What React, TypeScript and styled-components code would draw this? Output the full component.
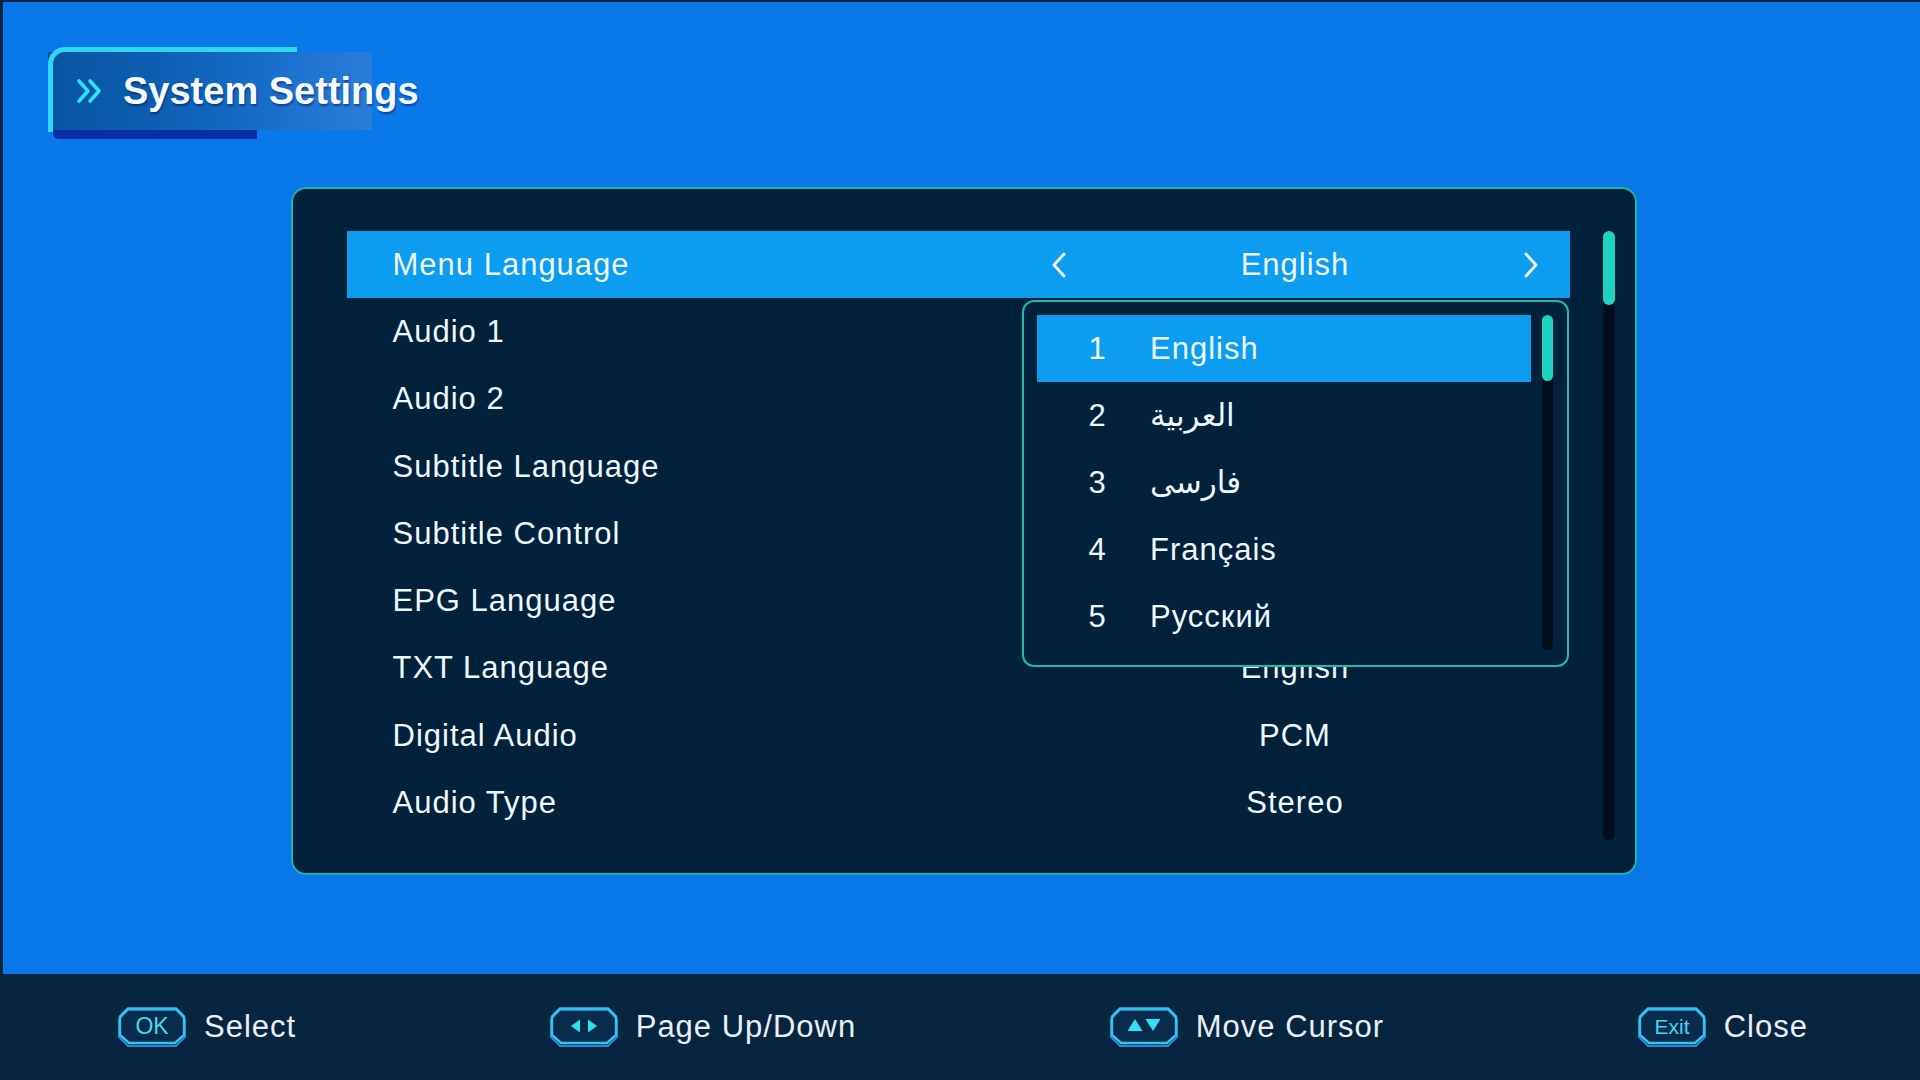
import React, { FC } from 'react'
import styled, { createGlobalStyle } from 'styled-components'

const rows = [
  { label: 'Menu Language', value: 'English' },
  { label: 'Audio 1', value: 'English' },
  { label: 'Audio 2', value: 'English' },
  { label: 'Subtitle Language', value: 'English' },
  { label: 'Subtitle Control', value: 'Off' },
  { label: 'EPG Language', value: 'English' },
  { label: 'TXT Language', value: 'English' },
  { label: 'Digital Audio', value: 'PCM' },
  { label: 'Audio Type', value: 'Stereo' },
]

const languages = ['English', 'العربية', 'فارسى', 'Français', 'Русский']

const GlobalStyle = createGlobalStyle`
  html, body {
    margin: 0;
    padding: 0;
  }

  body {
    width: 1920px;
    height: 1080px;
    overflow: hidden;
    background: #0b78ea;
    font-family: "Liberation Sans", Arial, "DejaVu Sans", sans-serif;
  }
`

const Chevrons: FC = () => (
  <ChevronIcon width = "26" height = "26" viewBox = "0 0 26 26">
    <path d = "M3 3 L12 13 L3 23 M14 3 L23 13 L14 23" fill = "none" stroke = "#2fe3f2" strokeWidth = "3.6" strokeLinecap = "round" strokeLinejoin = "round" />
  </ChevronIcon>
)

const Arrow: FC <{ dir: 'left' | 'right' }> = ({ dir }) => (
  <svg width = "16" height = "26" viewBox = "0 0 16 26">
    <path
      d = { dir === 'left' ? 'M13 2 L3 13 L13 24' : 'M3 2 L13 13 L3 24' }
      fill = "none"
      stroke = "#f2fbff"
      strokeWidth = "2.8"
      strokeLinecap = "round"
      strokeLinejoin = "round"
    />
  </svg>
)

type KeyKind = 'ok' | 'leftright' | 'updown' | 'exit'

const KeyBadge: FC <{ kind: KeyKind }> = ({ kind }) => (
  <svg width = "72" height = "42" viewBox = "0 0 72 42">
    <polygon points = "12,4 60,4 69,13 69,31 60,40 12,40 3,31 3,13" fill = "#0a2c4c" stroke = "#2a84d8" strokeWidth = "2" />
    <polygon points = "12,2.5 60,2.5 68,10.5 68,29 59,37 13,37 4,29 4,10.5" fill = "none" stroke = "#34c9ec" strokeWidth = "2.4" />
    { kind === 'ok' && <text x = "36" y = "28" textAnchor = "middle" fontSize = "23" fill = "#46d6f1" fontFamily = "Liberation Sans, Arial, sans-serif">OK</text> }
    { kind === 'exit' && <text x = "36" y = "28" textAnchor = "middle" fontSize = "21" fill = "#46d6f1" fontFamily = "Liberation Sans, Arial, sans-serif">Exit</text> }
    { kind === 'leftright' && (
      <g fill = "#2fe0f2">
        <polygon points = "23,20 32,13.5 32,26.5" />
        <polygon points = "49,20 40,13.5 40,26.5" />
      </g>
    ) }
    { kind === 'updown' && (
      <g fill = "#2fe0f2">
        <polygon points = "27,13 34.5,25 19.5,25" />
        <polygon points = "45,25 52.5,13 37.5,13" />
      </g>
    ) }
  </svg>
)

const App: FC = () => {

  return (
    <Screen>
      <GlobalStyle />
      <Header>
        <TitleTab>
          <Chevrons />
          <Title>System Settings</Title>
        </TitleTab>
      </Header>

      <Panel>
        <RowList>
          {
            rows.map (
              (row, i) =>
                <Row key = { i } active = { i === 0 }>
                  <Label>{ row.label }</Label>
                  <ValueCell>
                    { i === 0 ? <Arrow dir = "left" /> : <span /> }
                    <Value>{ row.value }</Value>
                    { i === 0 ? <Arrow dir = "right" /> : <span /> }
                  </ValueCell>
                </Row>
            )
          }

          <Dropdown>
            <OptionList>
              {
                languages.map (
                  (lang, i) =>
                    <Option key = { i } active = { i === 0 }>
                      <OptionNumber>{ i + 1 }</OptionNumber>
                      <OptionText dir = "auto">{ lang }</OptionText>
                    </Option>
                )
              }
            </OptionList>
            <ScrollTrack height = { 335 } width = { 11 }>
              <ScrollThumb height = { 66 } />
            </ScrollTrack>
          </Dropdown>
        </RowList>

        <ScrollTrack height = { 609 } width = { 12 }>
          <ScrollThumb height = { 74 } />
        </ScrollTrack>
      </Panel>

      <Footer>
        <Hint><KeyBadge kind = "ok" /><HintText>Select</HintText></Hint>
        <Hint><KeyBadge kind = "leftright" /><HintText>Page Up/Down</HintText></Hint>
        <Hint><KeyBadge kind = "updown" /><HintText>Move Cursor</HintText></Hint>
        <Hint><KeyBadge kind = "exit" /><HintText>Close</HintText></Hint>
      </Footer>
    </Screen>
  )
}

const Screen = styled.div `
  display: flex;
  flex-direction: column;
  width: 1920px;
  height: 1080px;
  background: #0b78ea;
  box-shadow: inset 3px 2px 0 #0a2543;
`

const Header = styled.div `
  display: flex;
  padding: 47px 0 0 48px;
`

const TitleTab = styled.div `
  position: relative;
  box-sizing: border-box;
  display: flex;
  align-items: center;
  gap: 21px;
  width: 324px;
  height: 92px;
  padding: 5px 0 9px 28px;
  background: linear-gradient(90deg, #0a55a3 0%, #0c5db0 30%, #1267c0 55%, #1f74d2 80%, #2a7cd9 100%);
  background-size: 100% 78px;
  background-position: 0 5px;
  background-repeat: no-repeat;

  &::before {
    content: '';
    position: absolute;
    left: 0;
    top: 0;
    width: 244px;
    height: 80px;
    border-left: 5px solid #2fd8ef;
    border-top: 5px solid #2fd8ef;
    border-top-left-radius: 17px;
  }

  &::after {
    content: '';
    position: absolute;
    left: 5px;
    bottom: 0;
    width: 204px;
    height: 9px;
    background: #0a2ea3;
    border-bottom-left-radius: 6px;
  }
`

const ChevronIcon = styled.svg `
  flex: none;
`

const Title = styled.div `
  flex: none;
  font-size: 38px;
  font-weight: 700;
  color: #f4faff;
  white-space: nowrap;
  text-shadow: 1px 2px 2px rgba(0, 10, 60, .45);
`

const Panel = styled.div `
  box-sizing: border-box;
  display: flex;
  align-items: flex-start;
  gap: 33px;
  width: 1346px;
  height: 688px;
  margin: 48px 0 0 291px;
  padding: 42px 20px 0 53.5px;
  background: #02213a;
  border: 2px solid #1fb2b0;
  border-radius: 15px;
`

const RowList = styled.div `
  position: relative;
  flex: 1;
  display: flex;
  flex-direction: column;
`

const Row = styled.div <{ active?: boolean }> `
  display: grid;
  grid-template-columns: 1fr 548px;
  align-items: center;
  height: 67.3px;
  background: ${ p => p.active ? '#0c9cf0' : 'transparent' };
`

const Label = styled.div `
  padding-left: 46px;
  font-size: 31px;
  letter-spacing: 1px;
  color: #eef7ff;
`

const ValueCell = styled.div `
  display: grid;
  grid-template-columns: 16px 1fr 16px;
  align-items: center;
  padding: 0 31px 0 29px;
`

const Value = styled.div `
  text-align: center;
  font-size: 31px;
  letter-spacing: 1px;
  color: #eef7ff;
`

const Dropdown = styled.div `
  position: absolute;
  top: 69px;
  right: 1px;
  box-sizing: border-box;
  display: flex;
  align-items: flex-start;
  gap: 11px;
  width: 547px;
  height: 367px;
  padding: 13px 14px 15px 13px;
  background: #02213a;
  border: 2px solid #22b8b2;
  border-radius: 12px;
`

const OptionList = styled.div `
  flex: 1;
  display: flex;
  flex-direction: column;
`

const Option = styled.div <{ active?: boolean }> `
  display: flex;
  align-items: center;
  height: 67px;
  padding-left: 47px;
  background: ${ p => p.active ? '#0c9cf0' : 'transparent' };
`

const OptionNumber = styled.div `
  width: 26px;
  text-align: center;
  font-size: 31px;
  color: #eef7ff;
`

const OptionText = styled.div `
  margin-left: 40px;
  font-size: 31px;
  letter-spacing: 1px;
  color: #eef7ff;
`

const ScrollTrack = styled.div <{ height: number, width: number }> `
  flex: none;
  display: flex;
  flex-direction: column;
  width: ${ p => p.width }px;
  height: ${ p => p.height }px;
  background: #000d1b;
  border-radius: 5px;
`

const ScrollThumb = styled.div <{ height: number }> `
  height: ${ p => p.height }px;
  background: #1fd2c2;
  border-radius: 6px;
`

const Footer = styled.div `
  box-sizing: border-box;
  display: flex;
  align-items: center;
  justify-content: space-between;
  height: 106px;
  margin-top: auto;
  padding: 0 112px 0 116px;
  background: #08253f;
`

const Hint = styled.div `
  display: flex;
  align-items: center;
  gap: 16px;
`

const HintText = styled.div `
  font-size: 31px;
  letter-spacing: 1px;
  color: #e8eff6;
  white-space: nowrap;
`

export default App
